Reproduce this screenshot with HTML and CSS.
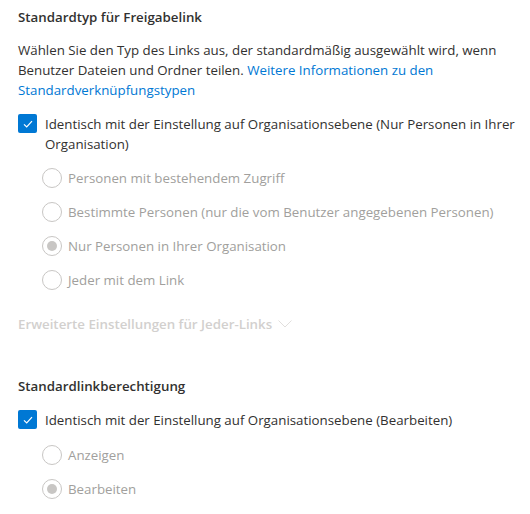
FILE: index.html
```html
<!DOCTYPE html>
<html lang="de">
<head>
<meta charset="utf-8">
<link rel="stylesheet" href="styles.css">
</head>
<body>
<div class="page">
  <section class="section">
    <h2 class="title">Standardtyp für Freigabelink</h2>
    <p class="desc">Wählen Sie den Typ des Links aus, der standardmäßig ausgewählt wird, wenn Benutzer Dateien und Ordner teilen. <a class="link" href="#">Weitere Informationen zu den Standardverknüpfungstypen</a></p>
    <label class="check">
      <span class="box"><svg width="12" height="12" viewBox="0 0 12 12"><path d="M2 6.3 L4.7 9 L10 3.2" fill="none" stroke="#fff" stroke-width="1.2"/></svg></span>
      <span class="check-text">Identisch mit der Einstellung auf Organisationsebene (Nur Personen in Ihrer Organisation)</span>
    </label>
    <div class="radios">
      <div class="radio"><span class="circle"></span><span>Personen mit bestehendem Zugriff</span></div>
      <div class="radio"><span class="circle"></span><span>Bestimmte Personen (nur die vom Benutzer angegebenen Personen)</span></div>
      <div class="radio"><span class="circle on"></span><span>Nur Personen in Ihrer Organisation</span></div>
      <div class="radio"><span class="circle"></span><span>Jeder mit dem Link</span></div>
    </div>
    <div class="advanced">Erweiterte Einstellungen für Jeder-Links <svg class="chev" width="14" height="8" viewBox="0 0 14 8"><path d="M0.5 0.5 L7 7 L13.5 0.5" fill="none" stroke="#e1dfdd" stroke-width="1"/></svg></div>
  </section>
  <section class="section second">
    <h2 class="title">Standardlinkberechtigung</h2>
    <label class="check">
      <span class="box"><svg width="12" height="12" viewBox="0 0 12 12"><path d="M2 6.3 L4.7 9 L10 3.2" fill="none" stroke="#fff" stroke-width="1.2"/></svg></span>
      <span class="check-text">Identisch mit der Einstellung auf Organisationsebene (Bearbeiten)</span>
    </label>
    <div class="radios">
      <div class="radio"><span class="circle"></span><span>Anzeigen</span></div>
      <div class="radio"><span class="circle on"></span><span>Bearbeiten</span></div>
    </div>
  </section>
</div>
</body>
</html>
```
FILE: styles.css
```css
* { box-sizing: border-box; }
body {
  margin: 0;
  background: #fff;
  font-family: "Open Sans", "Noto Sans", sans-serif;
  font-size: 13.3px;
  color: #323130;
}
.page { padding: 7px 8px 0 18px; }
.title {
  margin: 0;
  font-size: 13.3px;
  font-weight: 600;
  line-height: 20px;
}
.desc {
  margin: 13px 0 0 0;
  line-height: 20px;
  max-width: 490px;
}
.link { color: #0078d4; text-decoration: none; }
.check {
  display: flex;
  align-items: flex-start;
  gap: 8px;
  margin-top: 14px;
  line-height: 20px;
}
.box {
  flex: none;
  width: 19px;
  height: 19px;
  background: #0078d4;
  border-radius: 2px;
  display: flex;
  align-items: center;
  justify-content: center;
}
.radios {
  display: flex;
  flex-direction: column;
  gap: 14px;
  margin-top: 14px;
  padding-left: 24px;
  color: #a19f9d;
}
.radio {
  display: flex;
  align-items: center;
  gap: 6px;
  line-height: 20px;
}
.circle {
  flex: none;
  width: 20px;
  height: 20px;
  border: 1px solid #c8c6c4;
  border-radius: 50%;
  display: flex;
  align-items: center;
  justify-content: center;
}
.circle.on::after {
  content: "";
  width: 10px;
  height: 10px;
  border-radius: 50%;
  background: #c8c6c4;
}
.advanced {
  margin-top: 24px;
  font-weight: 600;
  color: #d2d0ce;
  line-height: 20px;
  display: flex;
  align-items: center;
  gap: 6px;
}
.second { margin-top: 42px; }
.second .radios { margin-top: 15px; }
```
